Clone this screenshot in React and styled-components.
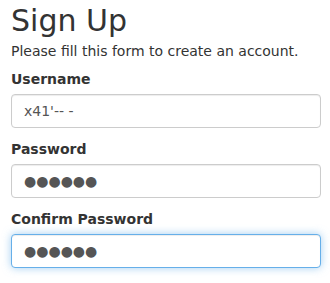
import React, { useEffect, useRef } from "react";
import styled, { createGlobalStyle, css } from "styled-components";

const GlobalStyle = createGlobalStyle`
	* {
		box-sizing: border-box;
	}
	body {
		margin: 0;
		background: #fff;
		font-family: "DejaVu Sans", Verdana, sans-serif;
		font-size: 14px;
		line-height: 1.42857;
		color: #333;
	}
`;

const Wrapper = styled.div`
	padding: 0 9px 0 11px;
`;

const Title = styled.h2`
	font-size: 30px;
	font-weight: 400;
	line-height: 33px;
	margin: 4px 0 5px;
	color: #333;
`;

const Intro = styled.p`
	margin: 0 0 8px;
`;

const FormGroup = styled.div`
	margin-bottom: 12px;
`;

const Label = styled.label`
	display: block;
	font-weight: 700;
	margin-bottom: 4px;
`;

const Input = styled.input`
	display: block;
	width: 100%;
	height: 34px;
	padding: 6px 12px;
	font-family: inherit;
	font-size: 14px;
	line-height: 1.42857;
	color: #555;
	background: #fff;
	border: 1px solid #ccc;
	border-radius: 4px;
	box-shadow: inset 0 1px 1px rgba(0, 0, 0, 0.075);
	outline: none;
	caret-color: #333;

	${(p) =>
		p.$masked &&
		css`
			font-size: 14px;
			letter-spacing: 0;
		`}

	${(p) =>
		p.$active &&
		css`
			border-color: #66afe9;
			box-shadow: inset 0 1px 1px rgba(0, 0, 0, 0.075),
				0 0 8px rgba(102, 175, 233, 0.6);
		`}

	&:focus {
		border-color: #66afe9;
		box-shadow: inset 0 1px 1px rgba(0, 0, 0, 0.075),
			0 0 8px rgba(102, 175, 233, 0.6);
	}
`;

const MASK = "\u25CF\u25CF\u25CF\u25CF\u25CF\u25CF";

const App = () => {
	const confirmRef = useRef(null);

	useEffect(() => {
		const el = confirmRef.current;
		if (el) {
			el.focus();
			el.setSelectionRange(el.value.length, el.value.length);
		}
	}, []);

	return (
		<Wrapper>
			<GlobalStyle />
			<Title>Sign Up</Title>
			<Intro>Please fill this form to create an account.</Intro>
			<FormGroup>
				<Label htmlFor="username">Username</Label>
				<Input id="username" type="text" defaultValue="x41'-- -" />
			</FormGroup>
			<FormGroup>
				<Label htmlFor="password">Password</Label>
				<Input id="password" type="text" defaultValue={MASK} $masked />
			</FormGroup>
			<FormGroup>
				<Label htmlFor="confirm">Confirm Password</Label>
				<Input
					id="confirm"
					ref={confirmRef}
					type="text"
					defaultValue={MASK}
					$masked
					$active
				/>
			</FormGroup>
		</Wrapper>
	);
};

export default App;
